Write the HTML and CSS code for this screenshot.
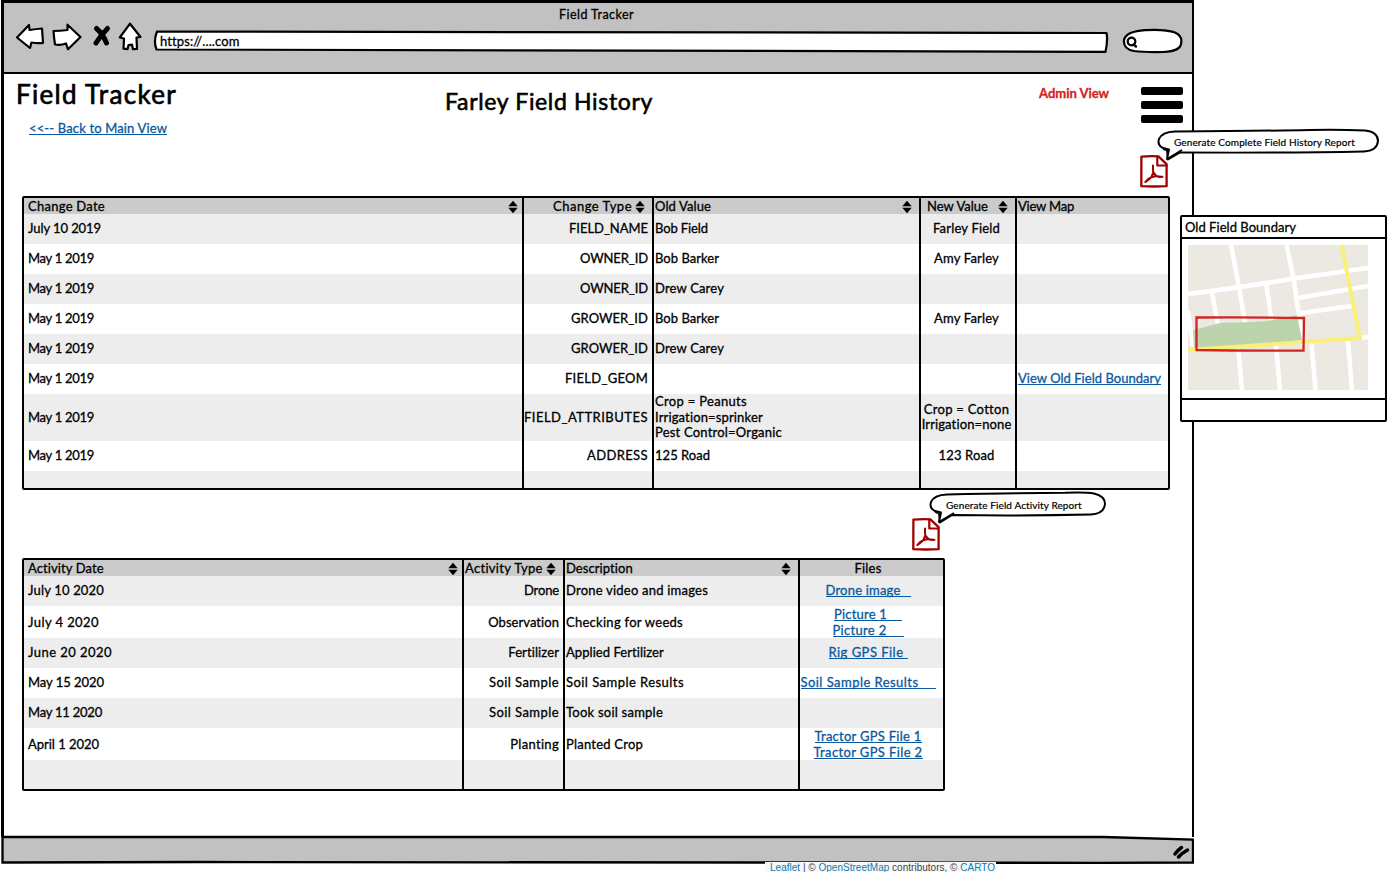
FILE: index.html
```html
<!DOCTYPE html>
<html lang="en">
<head>
<meta charset="utf-8">
<title>Field Tracker</title>
<link rel="stylesheet" href="styles.css">
</head>
<body>
<svg class="defs" width="0" height="0">
  <symbol id="sort" viewBox="0 0 10 14"><path d="M5 .7 9.700 6.200H.3ZM5 13.300 9.700 7.800H.3Z"/></symbol>
  <symbol id="pdf" viewBox="0 0 28 33">
    <path d="M1.4 1.6Q9 1 18.4 1.3L26.6 9.200V31.200Q14 31.800 1.300 31.200Z" stroke-width="2.300"/>
    <path d="M17.300 1.500V10.500H26.500" stroke-width="2.200"/>
    <path d="M13 10.500Q12.800 14 13.300 17.500L11.300 22.200Q9 25 5.300 27Q8 23.500 11.300 22.200L16.300 21Q19 22.300 22.500 21.800Q19 22 16.300 21L13.300 17.500" stroke-width="2"/>
  </symbol>
</svg>
<div class="stage">
  <div class="window">
    <header class="chrome">
      <div class="caption"><span data-w="75">Field Tracker</span></div>
      <div class="toolbar">
        <svg class="nav" width="129" height="30" viewBox="15 22 129 30">
          <g class="outline">
            <path d="M17 37.500 29 25 29.500 30Q36 29 42 28.500L43 43Q37 43.500 31.500 42.500L30 48Z"/>
            <path d="M53.500 31Q60 31 67.500 30L67.500 24.700 80.500 37 68 49.300 66 43.500Q61 45.500 55 44.500Q54 38 53.500 31Z"/>
            <path d="M130 23.700Q135 30 140.500 37L136.500 37.500 137 49 133 49.200 132 44.700 128.500 45 127.500 49.200 123.500 48.700 124 38.500 119.800 37.500Z"/>
          </g>
          <path class="cross" d="M96.500 28.500Q103 34 106.500 43M107.500 28.500Q101 35 96 43"/>
        </svg>
        <div class="address">
          <svg width="956" height="25" viewBox="153 29 956 25"><path class="outline" d="M157 31.500Q600 30.800 1106.500 33Q1108 40 1105.500 51.800Q600 50 156.500 49.500Q153.200 41 157 31.500Z"/></svg>
          <span data-w="79">https://....com</span>
        </div>
        <svg class="search" width="62" height="28" viewBox="1121 27 62 28">
          <path class="outline" d="M1124 40Q1126 31.500 1145 30.200Q1165 29 1175 32.500Q1183 36 1181 44Q1180 51 1164 52Q1145 52.500 1134 51Q1123 49 1124 40Z"/>
          <circle class="lens" cx="1131.500" cy="41.500" r="3.800"/><path class="lens" d="M1133.500 44.500 1136 46.500"/>
        </svg>
      </div>
    </header>

    <main class="page">
      <section class="top">
        <div class="brand">
          <h1><span data-w="161">Field Tracker</span></h1>
          <a class="link back" data-w="138">&lt;&lt;-- Back to Main View</a>
        </div>
        <h2><span data-w="208">Farley Field History</span></h2>
        <div class="admin"><span data-w="70">Admin View</span></div>
        <div class="actions">
          <div class="menu"><i></i><i></i><i></i></div>
          <svg class="pdf" width="28" height="33"><use href="#pdf"/></svg>
        </div>
      </section>

      <section class="table history">
        <div class="row head">
          <div class="c wide"><span data-w="77">Change Date</span><svg class="sort near"><use href="#sort"/></svg></div>
          <div class="c typehead"><span data-w="79">Change Type</span><svg class="sort"><use href="#sort"/></svg></div>
          <div class="c wide"><span data-w="56">Old Value</span><svg class="sort"><use href="#sort"/></svg></div>
          <div class="c newhead"><span data-w="61">New Value</span><svg class="sort"><use href="#sort"/></svg></div>
          <div class="c"><span data-w="56">View Map</span></div>
        </div>
        <div class="row"><div class="c"><span data-w="73">July 10 2019</span></div><div class="c end"><span data-w="79">FIELD_NAME</span></div><div class="c"><span data-w="53">Bob Field</span></div><div class="c mid"><span data-w="67">Farley Field</span></div><div class="c"></div></div>
        <div class="row"><div class="c"><span data-w="66">May 1 2019</span></div><div class="c end"><span data-w="68">OWNER_ID</span></div><div class="c"><span data-w="64">Bob Barker</span></div><div class="c mid"><span data-w="65">Amy Farley</span></div><div class="c"></div></div>
        <div class="row"><div class="c"><span data-w="66">May 1 2019</span></div><div class="c end"><span data-w="68">OWNER_ID</span></div><div class="c"><span data-w="69">Drew Carey</span></div><div class="c"></div><div class="c"></div></div>
        <div class="row"><div class="c"><span data-w="66">May 1 2019</span></div><div class="c end"><span data-w="77">GROWER_ID</span></div><div class="c"><span data-w="64">Bob Barker</span></div><div class="c mid"><span data-w="65">Amy Farley</span></div><div class="c"></div></div>
        <div class="row"><div class="c"><span data-w="66">May 1 2019</span></div><div class="c end"><span data-w="77">GROWER_ID</span></div><div class="c"><span data-w="69">Drew Carey</span></div><div class="c"></div><div class="c"></div></div>
        <div class="row"><div class="c"><span data-w="66">May 1 2019</span></div><div class="c end"><span data-w="83">FIELD_GEOM</span></div><div class="c"></div><div class="c"></div><div class="c"><a class="link" data-w="143">View Old Field Boundary</a></div></div>
        <div class="row"><div class="c"><span data-w="66">May 1 2019</span></div><div class="c end"><span data-w="124">FIELD_ATTRIBUTES</span></div><div class="c stack"><span data-w="92">Crop = Peanuts</span><span data-w="108">Irrigation=sprinker</span><span data-w="127">Pest Control=Organic</span></div><div class="c stack mid"><span data-w="85">Crop = Cotton</span><span data-w="90">Irrigation=none</span></div><div class="c"></div></div>
        <div class="row"><div class="c"><span data-w="66">May 1 2019</span></div><div class="c end"><span data-w="61">ADDRESS</span></div><div class="c"><span data-w="55">125 Road</span></div><div class="c mid"><span data-w="56">123 Road</span></div><div class="c"></div></div>
        <div class="row"><div class="c"></div><div class="c"></div><div class="c"></div><div class="c"></div><div class="c"></div></div>
      </section>

      <div class="between"><svg class="pdf" width="28" height="33"><use href="#pdf"/></svg></div>

      <section class="table activity">
        <div class="row head">
          <div class="c wide"><span data-w="76">Activity Date</span><svg class="sort near"><use href="#sort"/></svg></div>
          <div class="c wide"><span data-w="78">Activity Type</span><svg class="sort"><use href="#sort"/></svg></div>
          <div class="c wide"><span data-w="67">Description</span><svg class="sort"><use href="#sort"/></svg></div>
          <div class="c files"><span data-w="27">Files</span></div>
        </div>
        <div class="row"><div class="c"><span data-w="76">July 10 2020</span></div><div class="c end"><span data-w="35">Drone</span></div><div class="c"><span data-w="142">Drone video and images</span></div><div class="c files"><a class="link" data-w="75" data-tail="10">Drone image</a></div></div>
        <div class="row"><div class="c"><span data-w="71">July 4 2020</span></div><div class="c end"><span data-w="71">Observation</span></div><div class="c"><span data-w="117">Checking for weeds</span></div><div class="c stack files"><a class="link" data-w="53" data-tail="15">Picture 1</a><a class="link" data-w="54" data-tail="17">Picture 2</a></div></div>
        <div class="row"><div class="c"><span data-w="84">June 20 2020</span></div><div class="c end"><span data-w="51">Fertilizer</span></div><div class="c"><span data-w="98">Applied Fertilizer</span></div><div class="c files"><a class="link" data-w="75" data-tail="4">Rig GPS File</a></div></div>
        <div class="row"><div class="c"><span data-w="76">May 15 2020</span></div><div class="c end"><span data-w="70">Soil Sample</span></div><div class="c"><span data-w="118">Soil Sample Results</span></div><div class="c files"><a class="link" data-w="118" data-tail="17">Soil Sample Results</a></div></div>
        <div class="row"><div class="c"><span data-w="74">May 11 2020</span></div><div class="c end"><span data-w="70">Soil Sample</span></div><div class="c"><span data-w="97">Took soil sample</span></div><div class="c"></div></div>
        <div class="row"><div class="c"><span data-w="71">April 1 2020</span></div><div class="c end"><span data-w="49">Planting</span></div><div class="c"><span data-w="77">Planted Crop</span></div><div class="c stack files"><a class="link" data-w="107">Tractor GPS File 1</a><a class="link" data-w="109">Tractor GPS File 2</a></div></div>
        <div class="row"><div class="c"></div><div class="c"></div><div class="c"></div><div class="c"></div></div>
      </section>
    </main>

    <footer class="status">
      <svg width="1194" height="30" viewBox="0 835 1194 30">
        <path class="bar" d="M2.500 837H1103L1193 839.500V862.500L1100 862.800 200 862 2.500 862.500Z"/>
        <path class="grip" d="M1175 854Q1178 850 1181.500 847.500M1178.500 857Q1182 853 1187.500 850"/>
      </svg>
    </footer>
  </div>

  <div class="bubble one">
    <svg width="224" height="34" viewBox="1156 128 224 34"><path d="M1163 148Q1157 145 1159 139Q1162 132 1175 131.500Q1260 131 1310 130Q1340 129.500 1365 130.500Q1378 132 1378 141Q1377 151 1364 151.500Q1290 153 1180 152.500L1168 159.500 1167 150Q1164 150 1163 148Z"/><path d="M1163 148 1169 149.500 1167 159 1182 150"/></svg>
    <span data-w="181">Generate Complete Field History Report</span>
  </div>
  <div class="bubble two">
    <svg width="179" height="34" viewBox="928 491 179 34"><path d="M935 511Q929 508 931 502Q934 495 947 494.500Q1020 493 1065 492.800Q1085 492 1094 493.500Q1105 496 1105 504Q1104 514 1091 514.500Q1020 516 952 515L940 522.500 939 513Q936 513 935 511Z"/><path d="M935 511 941 512.500 939 522 954 513"/></svg>
    <span data-w="136">Generate Field Activity Report</span>
  </div>

  <aside class="popup">
    <div class="popup-title"><span data-w="111">Old Field Boundary</span></div>
    <div class="popup-body">
      <svg width="180" height="145" viewBox="0 0 180 145">
        <rect width="180" height="145" fill="#ebe9e2"/>
        <g stroke="#fff" stroke-width="4.500" fill="none">
          <path d="M0 49Q50 43 103 34L180 23"/>
          <path d="M43 0 51 42 57 78M98.500 0 106 36 115 100"/>
          <path d="M24 48 30 80M78 38 84 78M0 66 5 102"/>
          <path d="M110 53 180 41M113 68 164 61"/>
          <path d="M50 102 54 145M88 100 92 145M123.500 98 127.500 145M160 96 164 145M172 93 180 92"/>
        </g>
        <path d="M5 85 32 78Q70 77 85 75L109 70 114 95Q60 102 6 105Z" fill="#bcd4ab"/>
        <path d="M0 105 60 101 172 93 153.500 0" fill="none" stroke="#faf078" stroke-width="4"/>
        <path d="M8.500 72.500Q60 72 116 73L115.500 105.500Q60 106 8.500 105Z" fill="none" stroke="#d32323" stroke-width="2.300"/>
      </svg>
    </div>
    <div class="popup-foot"></div>
  </aside>

  <div class="credit"><span data-w="225"><b>Leaflet</b> | © <b>OpenStreetMap</b> contributors, © <b>CARTO</b></span></div>
</div>
<script src="fit.js"></script>
</body>
</html>
```
FILE: styles.css
```css
* { box-sizing: border-box; }
body { margin: 0; background: #fff; color: #000; font: 13px/16px Lato, "Open Sans", sans-serif; -webkit-text-stroke: .3px currentColor; }
svg { display: block; }
.defs { position: absolute; }
[data-w] { display: inline-block; white-space: nowrap; }
.stage { position: relative; width: 1387px; height: 872px; overflow: hidden; }

/* browser window */
.window { width: 1194px; height: 865px; padding-left: 1px; display: flex; flex-direction: column; }
.chrome { height: 74px; margin-top: 0; border: solid #000; border-width: 3px 2px 2px 3px; background: #c1c1c1; }
.caption { height: 22px; padding: 4px 3px 0 0; text-align: center; font-size: 12.500px; }
.toolbar { display: flex; padding-left: 11px; align-items: flex-start; }
.nav { margin-top: -3px; }
.outline { fill: #fff; stroke: #000; stroke-width: 2.200; stroke-linejoin: round; }
.cross { fill: none; stroke: #000; stroke-width: 5; stroke-linecap: round; }
.lens { fill: none; stroke: #000; stroke-width: 2.300; stroke-linecap: round; }
.address { position: relative; width: 956px; height: 25px; margin: 4px 0 0 9px; padding: 4px 0 0 7px; }
.address svg { position: absolute; left: 0; top: 0; }
.address span { position: relative; }
.search { margin: 2px 0 0 12px; }

.page { flex: 1; border: solid #000; border-width: 0 2px 0 3px; padding-left: 18px; }
.top { height: 122px; display: flex; }
.brand { width: 423px; margin-left: -6px; }
h1, h2 { margin: 0; font-weight: 400; }
h1 { font-size: 26px; line-height: 32px; padding-top: 4px; -webkit-text-stroke-width: .7px; }
.back { margin: 10px 0 0 13px; }
h2 { width: 600px; padding: 13px 0 0 6px; font-size: 23px; line-height: 28px; -webkit-text-stroke-width: .6px; }
.admin { width: 96px; padding-top: 11px; color: #d32323; font-weight: 700; }
.actions { padding-top: 13px; }
.menu { width: 42px; display: grid; gap: 6px; margin-left: 6px; }
.menu i { height: 8px; border-radius: 2px; background: #000; }
.pdf { fill: none; stroke: #a00000; stroke-linejoin: round; stroke-linecap: round; }
.actions .pdf { margin: 32px 0 0 5px; }
.link { color: #0a58a0; background: linear-gradient(currentColor, currentColor) 0 14px / 100% 1px no-repeat; }

/* tables */
.table { display: grid; border: 2px solid #000; border-radius: 2px; }
.history { width: 1148px; grid-template-rows: 16px repeat(6, 30px) 47px 30px 17px; }
.history .row { grid-template-columns: 498px 130px 267px 96px 153px; }
.activity { width: 923px; grid-template-rows: 16px 30px 32px 30px 30px 30px 32px 29px; }
.activity .row { grid-template-columns: 438px 101px 235px 145px; }
.row { display: grid; }
.row:nth-child(even) { background: #ededed; }
.row.head { background: #cbcbcb; }
.c { display: flex; align-items: center; padding: 0 4px 2px 1px; min-width: 0; border-left: 2px solid #000; }
.c:first-child { padding-left: 4px; border-left: 0; }
.end { justify-content: flex-end; }
.mid { justify-content: center; }
.c.files { justify-content: center; padding-right: 7px; padding-left: 0; }
.head .c { padding-bottom: 2px; }
.c.wide { justify-content: space-between; padding-right: 7px; }
.c.typehead { justify-content: flex-end; gap: 3px; padding-right: 7px; }
.c.newhead { padding: 0 7px 2px 6px; justify-content: space-between; }
.sort { width: 10px; height: 14px; margin-top: 2px; }
.near { margin-right: -3px; }
.stack { flex-direction: column; justify-content: center; align-items: flex-start; line-height: 15.500px; }
.stack.mid, .stack.files { align-items: center; }
.stack.files { line-height: 16px; }
.between { height: 68px; padding: 28px 0 0 890px; }

.status { height: 30px; margin: -2px 0 0 -1px; }
.bar { fill: #c1c1c1; stroke: #000; stroke-width: 2.300; }
.grip { fill: none; stroke: #000; stroke-width: 3.500; stroke-linecap: round; }

/* overlays */
.bubble { position: absolute; font-size: 10px; line-height: 14px; padding: 7px 0 0 18px; -webkit-text-stroke-width: .2px; }
.bubble svg { position: absolute; left: 0; top: 0; fill: #fff; stroke: #000; stroke-width: 2; stroke-linejoin: round; }
.bubble span { position: relative; }
.one { left: 1156px; top: 128px; }
.two { left: 928px; top: 491px; }
.popup { position: absolute; left: 1180px; top: 215px; width: 207px; height: 207px; border: 2.500px solid #000; border-radius: 2px; background: #fff; display: flex; flex-direction: column; }
.popup-title { height: 22px; padding: 2px 0 0 3px; border-bottom: 2px solid #000; }
.popup-body { flex: 1; padding: 6px 0 0 6px; }
.popup-foot { height: 22px; border-top: 2px solid #000; }
.credit { position: absolute; left: 765px; top: 862px; width: 231px; height: 10px; padding-left: 5px; background: #f6f8f9; font: 10px/11px "Liberation Sans", Arial, sans-serif; color: #444; -webkit-text-stroke: 0; }
.credit b { font-weight: 400; color: #0f7bab; }
```
FILE: fit.js
```js
// Track each label out to its own width; data-tail extends the underline past the text.
document.querySelectorAll('[data-w]').forEach(function (el) {
  var target = parseFloat(el.dataset.w);
  var natural = el.getBoundingClientRect().width;
  el.style.letterSpacing = (target - natural) / el.textContent.length + 'px';
  if (el.dataset.tail) el.style.paddingRight = el.dataset.tail + 'px';
});
```
